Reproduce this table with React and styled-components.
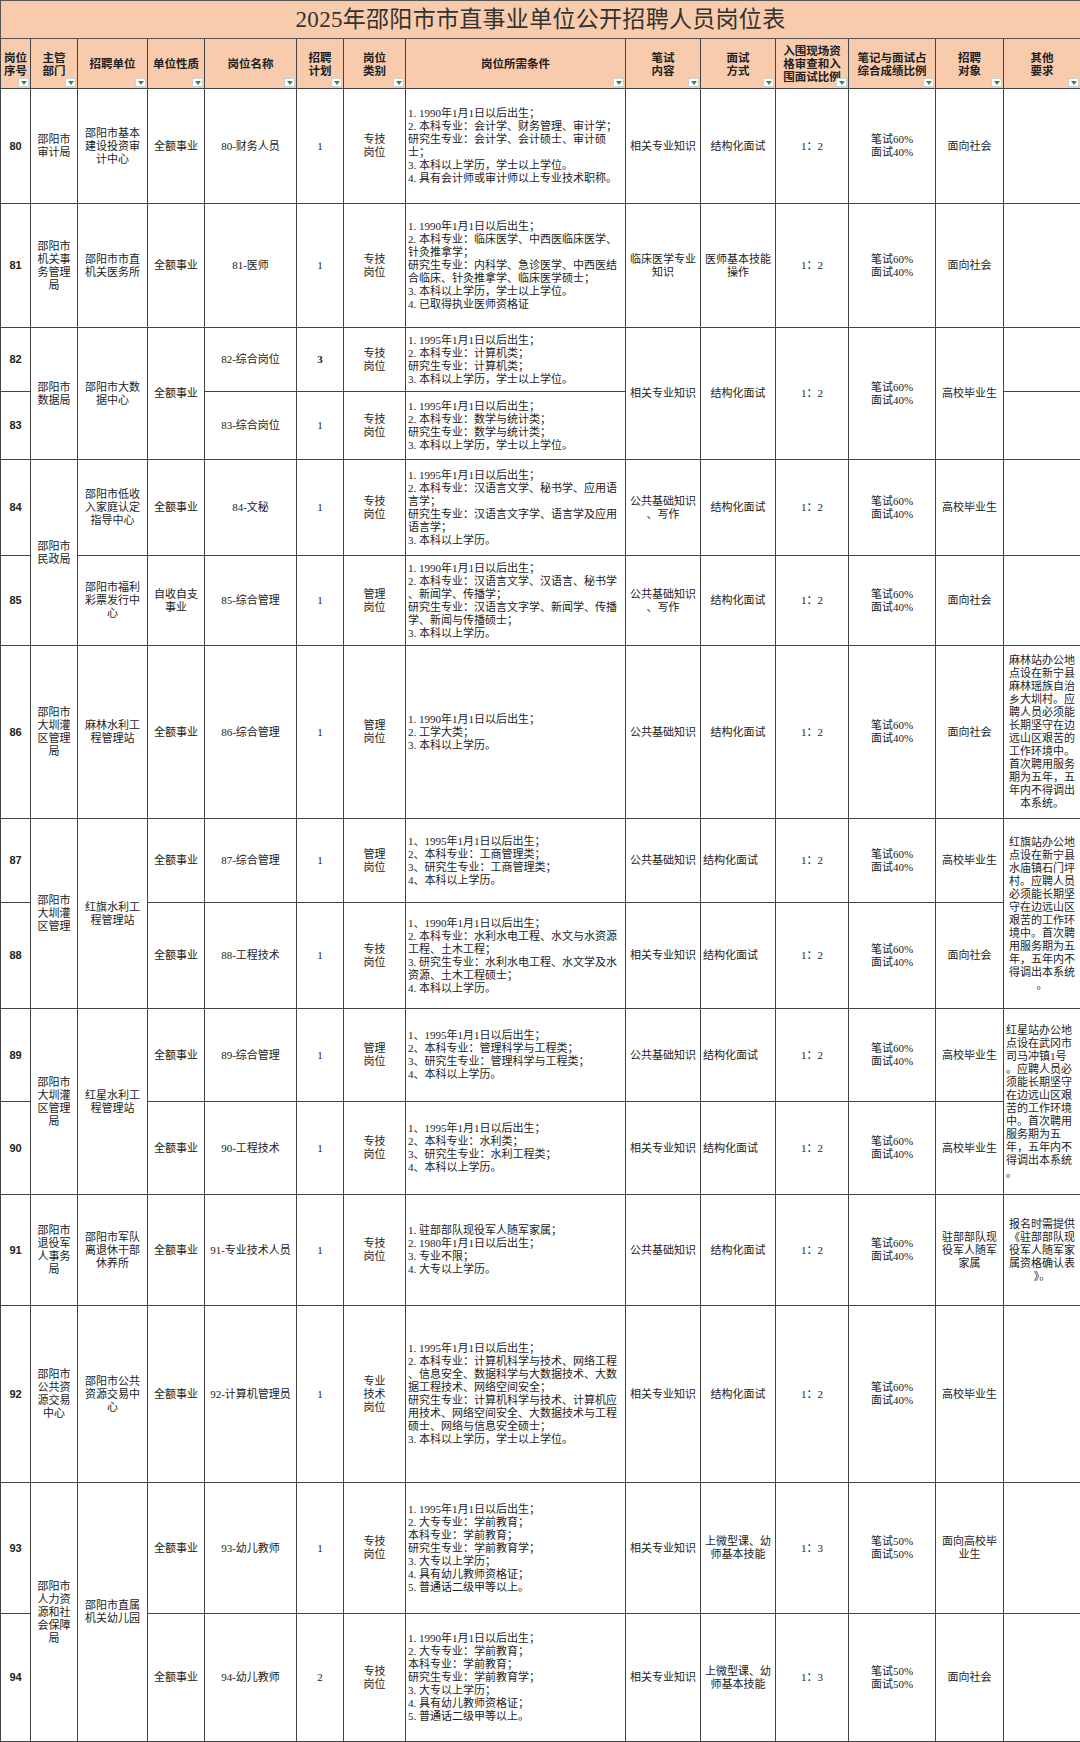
import React from 'react';
import styled, { createGlobalStyle } from 'styled-components';

const GlobalStyle = createGlobalStyle`
  html, body {
    margin: 0;
    padding: 0;
    background: #fff;
  }
  body {
    font-family: "Liberation Serif", "Noto Sans CJK SC", serif;
    color: #222;
  }
`;

const Sheet = styled.table`
  width: 1080px;
  border-collapse: collapse;
  table-layout: fixed;
`;

const TitleCell = styled.td`
  height: 37px;
  padding: 0;
  background: #f8cbad;
  border: 1px solid #555;
  text-align: center;
  vertical-align: middle;
  font-size: 23px;
  line-height: 26px;
  color: #333;
  letter-spacing: 0.3px;
`;

const HeadCell = styled.th`
  position: relative;
  height: 49px;
  padding: 0 2px;
  background: #f8cbad;
  border: 1px solid #444;
  font-family: "Noto Sans CJK SC", sans-serif;
  font-size: 11.5px;
  font-weight: 700;
  line-height: 13px;
  text-align: center;
  vertical-align: middle;
  color: #222;
`;

const FilterButton = styled.span`
  position: absolute;
  right: 1px;
  bottom: 1px;
  width: 11px;
  height: 9px;
  box-sizing: border-box;
  background: #fff;
  border: 1px solid #cfcfcf;

  &::after {
    content: '';
    position: absolute;
    left: 2px;
    top: 2px;
    border-left: 3px solid transparent;
    border-right: 3px solid transparent;
    border-top: 4px solid #2e8b62;
  }
`;

const BodyRow = styled.tr`
  height: ${p => p.$h}px;
`;

const Cell = styled.td`
  padding: 0 ${p => (p.$align === 'left' ? 2 : 1)}px;
  border: 1px solid #444;
  font-size: 11px;
  line-height: 13px;
  text-align: ${p => p.$align || 'center'};
  vertical-align: middle;
  font-weight: ${p => (p.$bold ? 700 : 400)};
  font-family: ${p => (p.$sans ? '"Liberation Sans", "Noto Sans CJK SC", sans-serif' : 'inherit')};
  color: #222;
  overflow: visible;
`;

const Line = styled.span`
  display: block;
  white-space: nowrap;
`;

const COLS = [30, 47, 70, 57, 92, 47, 62, 220, 75, 75, 73, 87, 68, 77];

const HEADS = [
  ['岗位', '序号'],
  ['主管', '部门'],
  ['招聘单位'],
  ['单位性质'],
  ['岗位名称'],
  ['招聘', '计划'],
  ['岗位', '类别'],
  ['岗位所需条件'],
  ['笔试', '内容'],
  ['面试', '方式'],
  ['入围现场资', '格审查和入', '围面试比例'],
  ['笔记与面试占', '综合成绩比例'],
  ['招聘', '对象'],
  ['其他', '要求'],
];

const c = (t, o = {}) => ({ t: Array.isArray(t) ? t : [t], ...o });
const no = n => c(n, { b: true, n: true });
const req = lines => c(lines, { a: 'left' });

const FULL = c('全额事业');
const TECH = c(['专技', '岗位']);
const MGMT = c(['管理', '岗位']);
const R12 = c('1：2');
const S64 = c(['笔试60%', '面试40%']);
const STRUCT = c('结构化面试');
const STRUCT_L = c('结构化面试', { a: 'left' });
const EMPTY = c([]);

const ROWS = [
  {
    h: 115,
    cells: [
      no('80'), c(['邵阳市', '审计局']), c(['邵阳市基本', '建设投资审', '计中心']), FULL,
      c('80-财务人员'), c('1'), TECH,
      req(['1. 1990年1月1日以后出生；', '2. 本科专业：会计学、财务管理、审计学；', '研究生专业：会计学、会计硕士、审计硕', '士；', '3. 本科以上学历，学士以上学位。', '4. 具有会计师或审计师以上专业技术职称。']),
      c('相关专业知识'), STRUCT, R12, S64, c('面向社会'), EMPTY,
    ],
  },
  {
    h: 124,
    cells: [
      no('81'), c(['邵阳市', '机关事', '务管理', '局']), c(['邵阳市市直', '机关医务所']), FULL,
      c('81-医师'), c('1'), TECH,
      req(['1. 1990年1月1日以后出生；', '2. 本科专业：临床医学、中西医临床医学、', '针灸推拿学；', '研究生专业：内科学、急诊医学、中西医结', '合临床、针灸推拿学、临床医学硕士；', '3. 本科以上学历，学士以上学位。', '4. 已取得执业医师资格证']),
      c(['临床医学专业', '知识']), c(['医师基本技能', '操作']), R12, S64, c('面向社会'), EMPTY,
    ],
  },
  {
    h: 64,
    cells: [
      no('82'), c(['邵阳市', '数据局'], { s: 2 }), c(['邵阳市大数', '据中心'], { s: 2 }), c('全额事业', { s: 2 }),
      c('82-综合岗位'), c('3', { b: true }), TECH,
      req(['1. 1995年1月1日以后出生；', '2. 本科专业：计算机类；', '研究生专业：计算机类；', '3. 本科以上学历，学士以上学位。']),
      c('相关专业知识', { s: 2 }), c('结构化面试', { s: 2 }), c('1：2', { s: 2 }), c(['笔试60%', '面试40%'], { s: 2 }),
      c('高校毕业生', { s: 2 }), EMPTY,
    ],
  },
  {
    h: 68,
    cells: [
      no('83'), c('83-综合岗位'), c('1'), TECH,
      req(['1. 1995年1月1日以后出生；', '2. 本科专业：数学与统计类；', '研究生专业：数学与统计类；', '3. 本科以上学历，学士以上学位。']),
      EMPTY,
    ],
  },
  {
    h: 96,
    cells: [
      no('84'), c(['邵阳市', '民政局'], { s: 2 }), c(['邵阳市低收', '入家庭认定', '指导中心']), FULL,
      c('84-文秘'), c('1'), TECH,
      req(['1. 1995年1月1日以后出生；', '2. 本科专业：汉语言文学、秘书学、应用语', '言学；', '研究生专业：汉语言文字学、语言学及应用', '语言学；', '3. 本科以上学历。']),
      c(['公共基础知识', '、写作']), STRUCT, R12, S64, c('高校毕业生'), EMPTY,
    ],
  },
  {
    h: 90,
    cells: [
      no('85'), c(['邵阳市福利', '彩票发行中', '心']), c(['自收自支', '事业']),
      c('85-综合管理'), c('1'), MGMT,
      req(['1. 1990年1月1日以后出生；', '2. 本科专业：汉语言文学、汉语言、秘书学', '、新闻学、传播学；', '研究生专业：汉语言文字学、新闻学、传播', '学、新闻与传播硕士；', '3. 本科以上学历。']),
      c(['公共基础知识', '、写作']), STRUCT, R12, S64, c('面向社会'), EMPTY,
    ],
  },
  {
    h: 173,
    cells: [
      no('86'), c(['邵阳市', '大圳灌', '区管理', '局']), c(['麻林水利工', '程管理站']), FULL,
      c('86-综合管理'), c('1'), MGMT,
      req(['1. 1990年1月1日以后出生；', '2. 工学大类；', '3. 本科以上学历。']),
      c('公共基础知识'), STRUCT, R12, S64, c('面向社会'),
      c(['麻林站办公地', '点设在新宁县', '麻林瑶族自治', '乡大圳村。应', '聘人员必须能', '长期坚守在边', '远山区艰苦的', '工作环境中。', '首次聘用服务', '期为五年，五', '年内不得调出', '本系统。']),
    ],
  },
  {
    h: 84,
    cells: [
      no('87'), c(['邵阳市', '大圳灌', '区管理'], { s: 2 }), c(['红旗水利工', '程管理站'], { s: 2 }), FULL,
      c('87-综合管理'), c('1'), MGMT,
      req(['1、1995年1月1日以后出生；', '2、本科专业：工商管理类；', '3、研究生专业：工商管理类；', '4、本科以上学历。']),
      c('公共基础知识'), STRUCT_L, R12, S64, c('高校毕业生'),
      c(['红旗站办公地', '点设在新宁县', '水庙镇石门坪', '村。应聘人员', '必须能长期坚', '守在边远山区', '艰苦的工作环', '境中。首次聘', '用服务期为五', '年，五年内不', '得调出本系统', '。'], { s: 2 }),
    ],
  },
  {
    h: 106,
    cells: [
      no('88'), FULL, c('88-工程技术'), c('1'), TECH,
      req(['1、1990年1月1日以后出生；', '2. 本科专业：水利水电工程、水文与水资源', '工程、土木工程；', '3. 研究生专业：水利水电工程、水文学及水', '资源、土木工程硕士；', '4. 本科以上学历。']),
      c('相关专业知识'), STRUCT_L, R12, S64, c('面向社会'),
    ],
  },
  {
    h: 93,
    cells: [
      no('89'), c(['邵阳市', '大圳灌', '区管理', '局'], { s: 2 }), c(['红星水利工', '程管理站'], { s: 2 }), FULL,
      c('89-综合管理'), c('1'), MGMT,
      req(['1、1995年1月1日以后出生；', '2、本科专业：管理科学与工程类；', '3、研究生专业：管理科学与工程类；', '4、本科以上学历。']),
      c('公共基础知识'), STRUCT_L, R12, S64, c('高校毕业生'),
      c(['红星站办公地', '点设在武冈市', '司马冲镇1号', '。应聘人员必', '须能长期坚守', '在边远山区艰', '苦的工作环境', '中。首次聘用', '服务期为五', '年，五年内不', '得调出本系统', '。'], { s: 2, a: 'left' }),
    ],
  },
  {
    h: 93,
    cells: [
      no('90'), FULL, c('90-工程技术'), c('1'), TECH,
      req(['1、1995年1月1日以后出生；', '2、本科专业：水利类；', '3、研究生专业：水利工程类；', '4、本科以上学历。']),
      c('相关专业知识'), STRUCT_L, R12, S64, c('高校毕业生'),
    ],
  },
  {
    h: 111,
    cells: [
      no('91'), c(['邵阳市', '退役军', '人事务', '局']), c(['邵阳市军队', '离退休干部', '休养所']), FULL,
      c('91-专业技术人员'), c('1'), TECH,
      req(['1. 驻部部队现役军人随军家属；', '2. 1980年1月1日以后出生；', '3. 专业不限；', '4. 大专以上学历。']),
      c('公共基础知识'), STRUCT, R12, S64, c(['驻部部队现', '役军人随军', '家属']),
      c(['报名时需提供', '《驻部部队现', '役军人随军家', '属资格确认表', '》。']),
    ],
  },
  {
    h: 177,
    cells: [
      no('92'), c(['邵阳市', '公共资', '源交易', '中心']), c(['邵阳市公共', '资源交易中', '心']), FULL,
      c('92-计算机管理员'), c('1'), c(['专业', '技术', '岗位']),
      req(['1. 1995年1月1日以后出生；', '2. 本科专业：计算机科学与技术、网络工程', '、信息安全、数据科学与大数据技术、大数', '据工程技术、网络空间安全；', '研究生专业：计算机科学与技术、计算机应', '用技术、网络空间安全、大数据技术与工程', '硕士、网络与信息安全硕士；', '3. 本科以上学历，学士以上学位。']),
      c('相关专业知识'), STRUCT, R12, S64, c('高校毕业生'), EMPTY,
    ],
  },
  {
    h: 131,
    cells: [
      no('93'), c(['邵阳市', '人力资', '源和社', '会保障', '局'], { s: 2 }), c(['邵阳市直属', '机关幼儿园'], { s: 2 }), FULL,
      c('93-幼儿教师'), c('1'), TECH,
      req(['1. 1995年1月1日以后出生；', '2. 大专专业：学前教育；', '本科专业：学前教育；', '研究生专业：学前教育学；', '3. 大专以上学历；', '4. 具有幼儿教师资格证；', '5. 普通话二级甲等以上。']),
      c('相关专业知识'), c(['上微型课、幼', '师基本技能']), c('1：3'), c(['笔试50%', '面试50%']),
      c(['面向高校毕', '业生']), EMPTY,
    ],
  },
  {
    h: 128,
    cells: [
      no('94'), FULL, c('94-幼儿教师'), c('2'), TECH,
      req(['1. 1990年1月1日以后出生；', '2. 大专专业：学前教育；', '本科专业：学前教育；', '研究生专业：学前教育学；', '3. 大专以上学历；', '4. 具有幼儿教师资格证；', '5. 普通话二级甲等以上。']),
      c('相关专业知识'), c(['上微型课、幼', '师基本技能']), c('1：3'), c(['笔试50%', '面试50%']),
      c('面向社会'), EMPTY,
    ],
  },
];

const Lines = ({ items }) => items.map((t, i) => <Line key={i}>{t}</Line>);

export default function App() {
  return (
    <>
      <GlobalStyle />
      <Sheet>
        <colgroup>
          {COLS.map((w, i) => <col key={i} style={{ width: w }} />)}
        </colgroup>
        <thead>
          <tr>
            <TitleCell colSpan={14}>2025年邵阳市市直事业单位公开招聘人员岗位表</TitleCell>
          </tr>
          <tr>
            {HEADS.map((h, i) => (
              <HeadCell key={i}>
                <Lines items={h} />
                <FilterButton />
              </HeadCell>
            ))}
          </tr>
        </thead>
        <tbody>
          {ROWS.map((row, r) => (
            <BodyRow key={r} $h={row.h}>
              {row.cells.map((cell, i) => (
                <Cell key={i} rowSpan={cell.s} $align={cell.a} $bold={cell.b} $sans={cell.n}>
                  <Lines items={cell.t} />
                </Cell>
              ))}
            </BodyRow>
          ))}
        </tbody>
      </Sheet>
    </>
  );
}
